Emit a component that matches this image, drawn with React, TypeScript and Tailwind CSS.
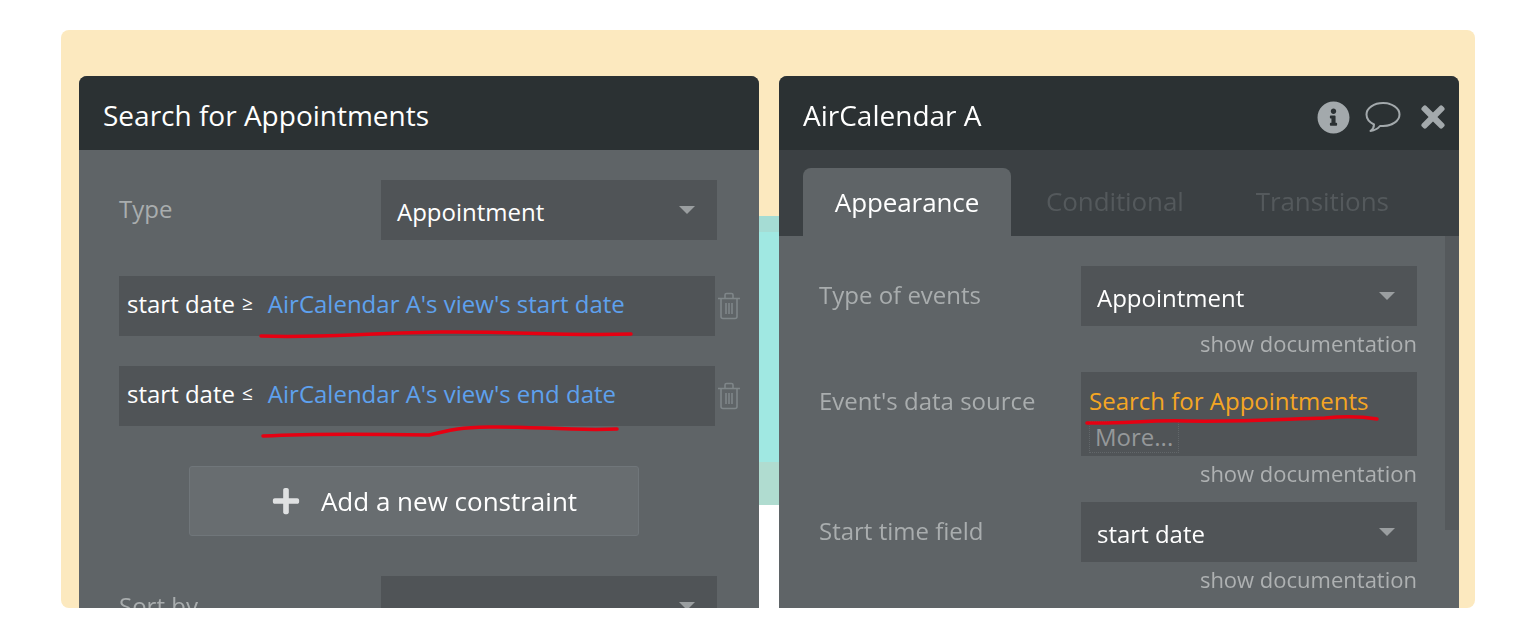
import { FaInfoCircle, FaTimes, FaPlus } from "react-icons/fa";

function Caret() {
  return <span className="h-0 w-0 border-x-[8px] border-t-[8px] border-x-transparent border-t-[#9a9ea0]" />;
}

function Trash() {
  return (
    <svg viewBox="0 0 24 28" className="h-[28px] w-[24px] shrink-0 fill-none stroke-[#7f8689] stroke-[1.6]">
      <path d="M1 6.5h22M4 6.5v18a2 2 0 0 0 2 2h12a2 2 0 0 0 2-2v-18M8 6.5V3a1.5 1.5 0 0 1 1.5-1.5h5A1.5 1.5 0 0 1 16 3v3.5M9 11v11M12 11v11M15 11v11" />
    </svg>
  );
}

function Comment() {
  return (
    <svg viewBox="0 0 36 32" className="h-[32px] w-[36px] fill-none stroke-[#a3a9ac] stroke-[2]">
      <path d="M18 2C9 2 1.500 7 1.500 13.500C1.500 18 5 21.500 9 23.500C9 26 7.500 28.500 5.500 30C9.500 29.500 13 27.500 15 25C16 25 17 25 18 25C27 25 34.500 20 34.500 13.500C34.500 7 27 2 18 2Z" strokeLinejoin="round" />
    </svg>
  );
}

function Select({ value, className = "" }: { value?: string; className?: string }) {
  return (
    <div className={`flex h-[60px] w-[336px] shrink-0 items-center justify-between bg-[#505457] pl-4 pr-[22px] text-[24px] text-white ${className}`}>
      <span className="pt-[3px]">{value}</span>
      <Caret />
    </div>
  );
}

function Constraint({ op, value, line }: { op: string; value: string; line: string }) {
  return (
    <div className="flex items-center gap-[2px]">
      <div className="relative flex h-[60px] w-[596px] shrink-0 items-center bg-[#505457] pl-2 pb-[5px] text-[24px]">
        <span className="text-white">start date</span>
        <span className="ml-[7px] text-[19px] text-white">{op}</span>
        <span className="ml-[15px] whitespace-nowrap text-[#5ea1ee]">{value}</span>
        <svg viewBox="0 0 380 40" className="absolute top-[40px] left-[140px] h-[40px] w-[380px] fill-none stroke-[#e60012] stroke-[3.5]">
          <path d={line} strokeLinecap="round" />
        </svg>
      </div>
      <Trash />
    </div>
  );
}

function Doc() {
  return <div className="mr-[42px] pt-[3px] text-right text-[22px] leading-[28px] text-[#aeb1b2]">show documentation</div>;
}

function Left() {
  return (
    <div className="w-[680px] shrink-0 rounded-t-lg bg-[#5f6467]">
      <div className="flex h-[74px] items-center rounded-t-lg bg-[#2b3133] pt-1 pl-6 text-[28px] text-white">Search for Appointments</div>
      <div className="px-10 pt-[30px]">
        <div className="flex items-center justify-between pr-[2px]">
          <span className="pb-[3px] text-[24px] text-[#a9adae]">Type</span>
          <Select value="Appointment" />
        </div>
        <div className="mt-9 flex flex-col gap-[30px]">
          <Constraint op="≥" value="AirCalendar A's view's start date" line="M2 20 C60 22 90 18 180 16 C250 15 300 20 372 18" />
          <Constraint op="≤" value="AirCalendar A's view's end date" line="M4 30 C60 27 120 28 170 29 C190 25 190 22 230 21 C270 20 310 25 358 23" />
        </div>
        <div className="mt-10 ml-[70px] flex h-[70px] w-[450px] items-center justify-center gap-5 rounded-[3px] border border-[#70767a] bg-[#686d70] pl-5 text-[26px] text-white">
          <FaPlus className="text-[30px] text-[#dfe1e2]" />
          <span>Add a new constraint</span>
        </div>
        <div className="mt-10 flex items-center justify-between pr-[2px]">
          <span className="text-[24px] text-[#a9adae]">Sort by</span>
          <Select />
        </div>
      </div>
    </div>
  );
}

function Label({ text, className = "" }: { text: string; className?: string }) {
  return <span className={`text-[24px] text-[#a9adae] ${className}`}>{text}</span>;
}

function Right() {
  return (
    <div className="w-[680px] shrink-0 rounded-t-lg bg-[#5f6467]">
      <div className="flex h-[74px] items-center justify-between rounded-t-lg bg-[#2b3133] pt-1 pr-[9px] pl-6">
        <span className="text-[28px] text-white">AirCalendar A</span>
        <div className="flex items-center gap-[15px] pt-1 text-[#a3a9ac]">
          <FaInfoCircle className="text-[33px]" />
          <Comment />
          <FaTimes className="text-[34px]" />
        </div>
      </div>
      <div className="flex h-[86px] items-end bg-[#3b4043] pl-6 text-[26px] tracking-[-0.1px] text-[#54595c]">
        <div className="flex h-[68px] w-[208px] items-center justify-center rounded-t-lg bg-[#5f6467] text-white">Appearance</div>
        <span className="mb-[15px] ml-[35px]">Conditional</span>
        <span className="mb-[15px] ml-[72px]">Transitions</span>
      </div>
      <div className="relative pt-[30px]">
        <div className="absolute top-0 right-0 h-[294px] w-[14px] bg-[#55595c]" />
        <div className="flex items-center justify-between pr-[42px] pl-10">
          <Label text="Type of events" className="pb-[3px]" />
          <Select value="Appointment" />
        </div>
        <Doc />
        <div className="mt-[15px] flex items-start justify-between pr-[42px] pl-10">
          <Label text="Event's data source" className="pt-[13px] leading-[32px]" />
          <div className="relative flex h-[84px] w-[336px] flex-col bg-[#505457] pl-2 text-[24px]">
            <span className="pt-[13px] leading-[32px] text-[#f5a623]">Search for Appointments</span>
            <span className="mt-[4px] w-fit border border-dotted border-[#62676a] px-[5px] leading-[30px] text-[#95989a]">More...</span>
            <svg viewBox="0 0 300 20" className="absolute top-[37px] left-[4px] h-[20px] w-[300px] fill-none stroke-[#e60012] stroke-[3.5]">
              <path d="M2 14 C40 15 60 11 100 12 C160 13 200 10 240 9 C260 7 280 8 292 10" strokeLinecap="round" />
            </svg>
          </div>
        </div>
        <Doc />
        <div className="mt-[15px] flex items-center justify-between pr-[42px] pl-10">
          <Label text="Start time field" className="pb-[3px]" />
          <Select value="start date" />
        </div>
        <Doc />
      </div>
    </div>
  );
}

export default function App() {
  return (
    <div className="h-[628px] w-[1530px] overflow-hidden bg-white pt-[30px] pl-[61px] font-['Open_Sans',sans-serif]">
      <div className="flex h-[578px] w-[1414px] overflow-hidden rounded-lg bg-[#fce9bf] pt-[46px] pl-[18px] blur-[0.5px]">
        <Left />
        {/* app canvas showing through between the two panels */}
        <div className="flex w-5 shrink-0 flex-col">
          <div className="h-[140px]" />
          <div className="h-[16px] bg-[#a5dcd4]" />
          <div className="h-[230px] bg-[#a0e8e2]" />
          <div className="h-[43px] bg-[#b0dcd0]" />
          <div className="flex-1 bg-white" />
        </div>
        <Right />
      </div>
    </div>
  );
}
